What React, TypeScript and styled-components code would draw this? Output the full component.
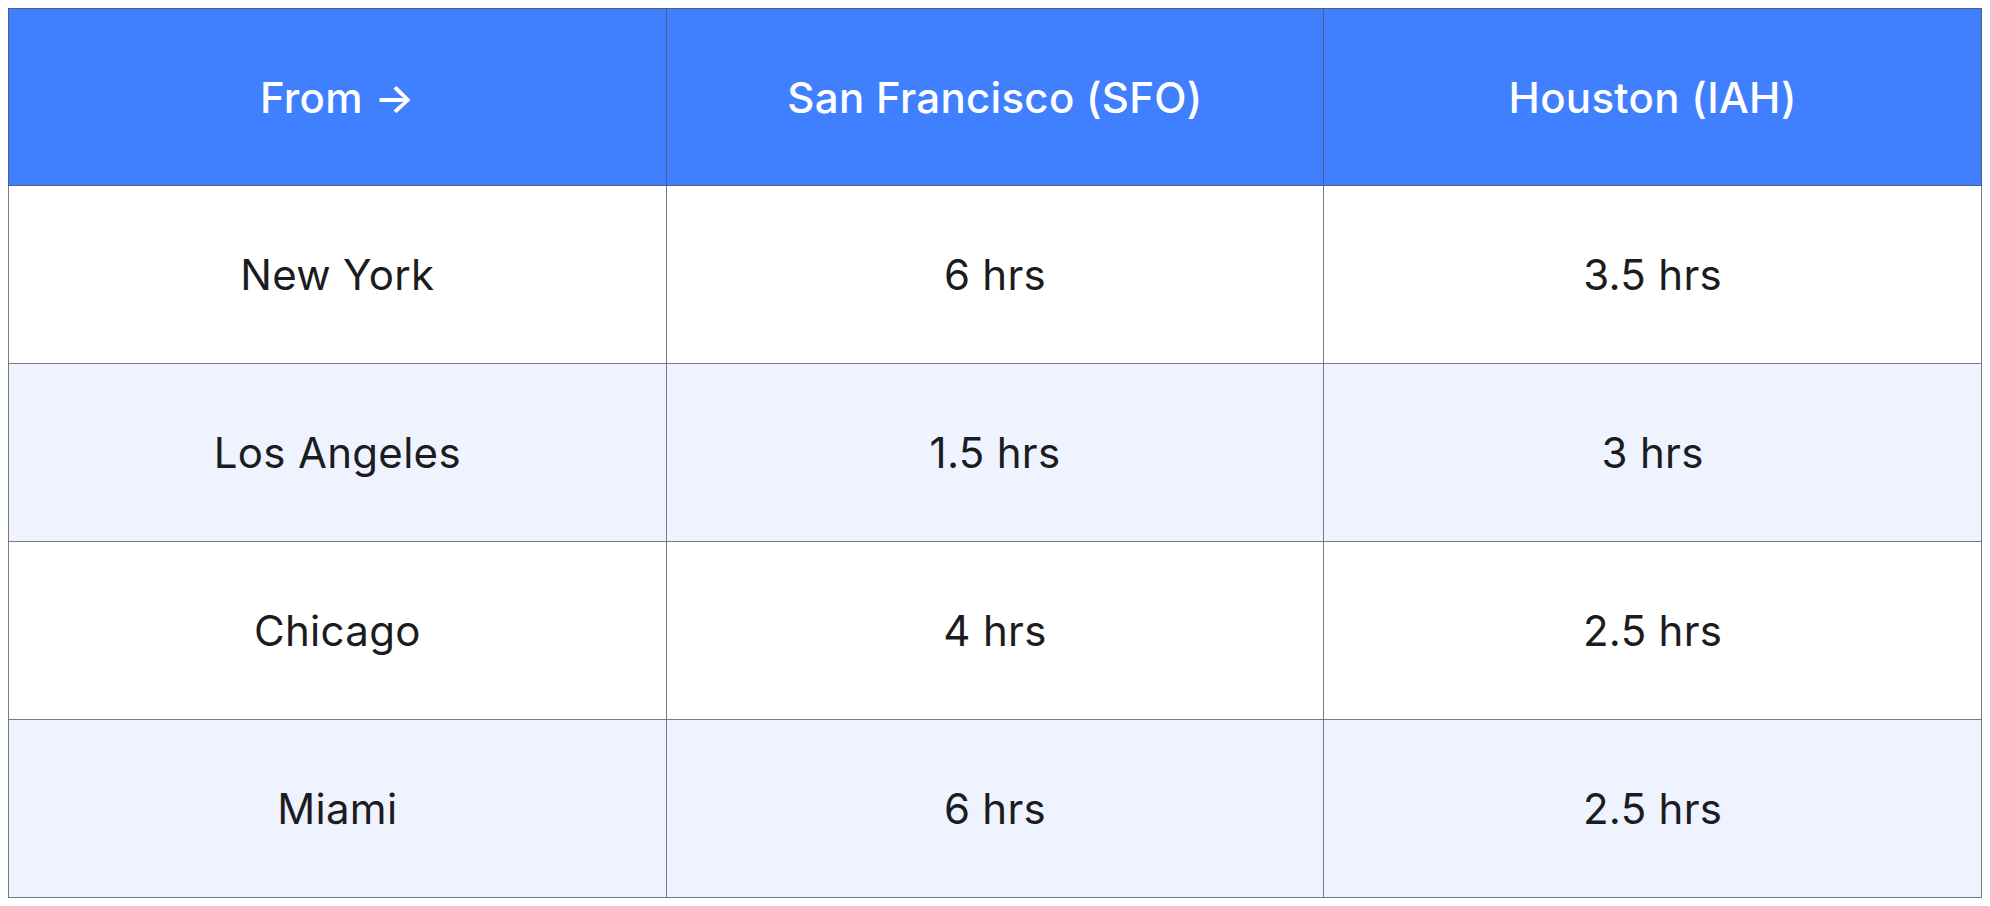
import styled, { createGlobalStyle } from "styled-components";

const GlobalStyle = createGlobalStyle`
	html, body {
		margin: 0;
		padding: 0;
		background: #ffffff;
	}

	body {
		padding: 8px;
		font-family: Inter, "Noto Sans", sans-serif;
	}
`;

/* TABLE */

const Table = styled.table`
	width: 100%;
	border-collapse: collapse;
	table-layout: fixed;
	border: 1px solid #777a80;
`;

const HeadRow = styled.tr`
	height: 177px;
`;

const HeadCell = styled.th`
	background: #4080ff;
	color: #ffffff;
	font-weight: 500;
	font-size: 42px;
	letter-spacing: 0.3px;
	text-align: center;
	vertical-align: middle;
	border: 1px solid #4a5f8a;
	padding: 0;
`;

const Row = styled.tr<{ $striped?: boolean }>`
	height: 178px;
	background: ${(props) => (props.$striped ? "#eef3ff" : "#ffffff")};
`;

const Cell = styled.td`
	color: #1c1c1e;
	font-weight: 400;
	font-size: 42px;
	letter-spacing: 0.3px;
	text-align: center;
	vertical-align: middle;
	border: 1px solid #777a80;
	padding: 0;
`;

const rows = [
	{ city: "New York", sfo: "6 hrs", iah: "3.5 hrs" },
	{ city: "Los Angeles", sfo: "1.5 hrs", iah: "3 hrs" },
	{ city: "Chicago", sfo: "4 hrs", iah: "2.5 hrs" },
	{ city: "Miami", sfo: "6 hrs", iah: "2.5 hrs" },
];

export default function App() {
	return (
		<>
			<GlobalStyle />
			<Table>
				<thead>
					<HeadRow>
						<HeadCell>From →</HeadCell>
						<HeadCell>San Francisco (SFO)</HeadCell>
						<HeadCell>Houston (IAH)</HeadCell>
					</HeadRow>
				</thead>
				<tbody>
					{rows.map((row, i) => (
						<Row key={row.city} $striped={i % 2 === 1}>
							<Cell>{row.city}</Cell>
							<Cell>{row.sfo}</Cell>
							<Cell>{row.iah}</Cell>
						</Row>
					))}
				</tbody>
			</Table>
		</>
	);
}
